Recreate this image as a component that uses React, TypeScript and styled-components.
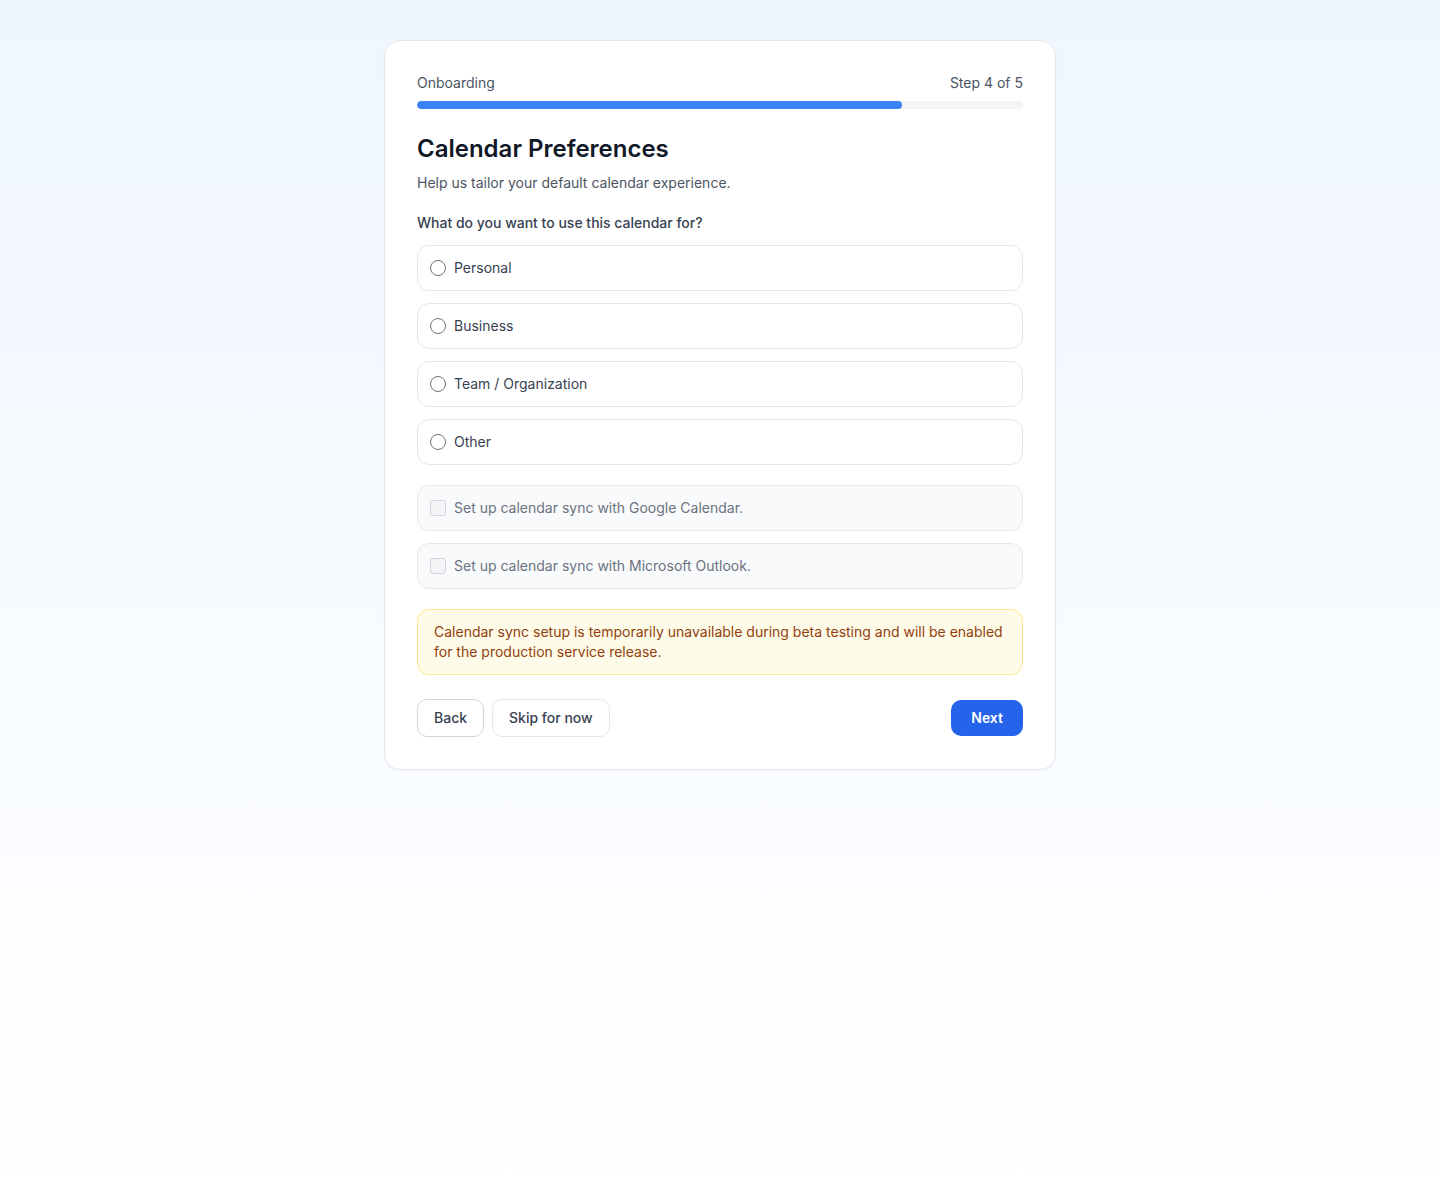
import { useState } from 'react'
import styled, { createGlobalStyle } from 'styled-components'

const GlobalStyle = createGlobalStyle`
  * {
    box-sizing: border-box;
  }

  body {
    margin: 0;
    font-family: Inter, 'Noto Sans', Arial, sans-serif;
    color: #111827;
  }
`

const Page = styled.div`
  min-height: 1200px;
  padding-top: 40px;
  background: linear-gradient(to bottom, #eff6ff 0%, #ffffff 100%);
`

const Card = styled.div`
  width: 672px;
  margin: 0 auto;
  padding: 32px;
  background-color: #ffffff;
  border: 1px solid #e5e7eb;
  border-radius: 16px;
  box-shadow: 0 1px 2px rgba(15, 23, 42, 0.04);
`

const StepHeader = styled.div`
  display: flex;
  justify-content: space-between;
  align-items: center;
  font-size: 14px;
  line-height: 20px;
  color: #4b5563;
  margin-bottom: 8px;
`

const ProgressTrack = styled.div`
  height: 8px;
  border-radius: 999px;
  background-color: #f3f4f6;
  overflow: hidden;
  margin-bottom: 24px;
`

const ProgressFill = styled.div`
  height: 100%;
  border-radius: 999px;
  background-color: #3b82f6;
`

const Title = styled.h1`
  margin: 0 0 8px;
  font-size: 24px;
  line-height: 32px;
  font-weight: 600;
  color: #111827;
`

const Subtitle = styled.p`
  margin: 0 0 20px;
  font-size: 14px;
  line-height: 20px;
  color: #4b5563;
`

const Question = styled.p`
  margin: 0 0 12px;
  font-size: 14px;
  line-height: 20px;
  font-weight: 500;
  color: #374151;
`

const OptionList = styled.div`
  display: flex;
  flex-direction: column;
  gap: 12px;
  margin-bottom: 20px;
`

const OptionRow = styled.label<{ $disabled?: boolean }>`
  display: flex;
  align-items: center;
  gap: 8px;
  padding: 12px;
  border: 1px solid #e5e7eb;
  border-radius: 12px;
  font-size: 14px;
  line-height: 20px;
  color: ${({ $disabled }) => ($disabled ? '#6b7280' : '#374151')};
  background-color: ${({ $disabled }) => ($disabled ? '#f9fafb' : '#ffffff')};
  cursor: ${({ $disabled }) => ($disabled ? 'not-allowed' : 'pointer')};
`

const Radio = styled.span<{ $checked: boolean }>`
  width: 16px;
  height: 16px;
  flex-shrink: 0;
  border-radius: 50%;
  border: 1px solid ${({ $checked }) => ($checked ? '#2563eb' : '#6b7280')};
  box-shadow: ${({ $checked }) => ($checked ? 'inset 0 0 0 3px #ffffff' : 'none')};
  background-color: ${({ $checked }) => ($checked ? '#2563eb' : '#ffffff')};
`

const Checkbox = styled.span`
  width: 16px;
  height: 16px;
  flex-shrink: 0;
  border-radius: 3px;
  border: 1px solid #d1d5db;
  background-color: #f3f4f6;
`

const Notice = styled.div`
  padding: 12px 16px;
  margin-bottom: 24px;
  border: 1px solid #fde68a;
  border-radius: 12px;
  background-color: #fefce8;
  color: #92400e;
  font-size: 14px;
  line-height: 20px;
`

const Actions = styled.div`
  display: flex;
  align-items: center;
  justify-content: space-between;
`

const ButtonGroup = styled.div`
  display: flex;
  gap: 8px;
`

const OutlineButton = styled.button<{ $strong?: boolean }>`
  padding: 8px 16px;
  border: 1px solid ${({ $strong }) => ($strong ? '#d1d5db' : '#e5e7eb')};
  border-radius: 10px;
  background-color: #ffffff;
  font-family: inherit;
  font-size: 14px;
  line-height: 20px;
  font-weight: 500;
  color: #374151;
  cursor: pointer;
`

const PrimaryButton = styled.button`
  padding: 8px 20px;
  border: none;
  border-radius: 10px;
  background-color: #2563eb;
  font-family: inherit;
  font-size: 14px;
  line-height: 20px;
  font-weight: 600;
  color: #ffffff;
  cursor: pointer;
`

const USES = ['Personal', 'Business', 'Team / Organization', 'Other']

const SYNC_OPTIONS = [
  'Set up calendar sync with Google Calendar.',
  'Set up calendar sync with Microsoft Outlook.',
]

export default function App() {
  const [selected, setSelected] = useState<string | null>(null)
  const step = 4
  const total = 5

  return (
    <>
      <GlobalStyle />
      <Page>
        <Card>
          <StepHeader>
            <span>Onboarding</span>
            <span>
              Step {step} of {total}
            </span>
          </StepHeader>
          <ProgressTrack>
            <ProgressFill style={{ width: `${(step / total) * 100}%` }} />
          </ProgressTrack>

          <Title>Calendar Preferences</Title>
          <Subtitle>Help us tailor your default calendar experience.</Subtitle>

          <Question>What do you want to use this calendar for?</Question>
          <OptionList>
            {USES.map((use) => (
              <OptionRow key={use} onClick={() => setSelected(use)}>
                <Radio $checked={selected === use} />
                {use}
              </OptionRow>
            ))}
          </OptionList>

          <OptionList>
            {SYNC_OPTIONS.map((option) => (
              <OptionRow key={option} $disabled>
                <Checkbox />
                {option}
              </OptionRow>
            ))}
          </OptionList>

          <Notice>
            Calendar sync setup is temporarily unavailable during beta testing and will be
            enabled for the production service release.
          </Notice>

          <Actions>
            <ButtonGroup>
              <OutlineButton $strong>Back</OutlineButton>
              <OutlineButton>Skip for now</OutlineButton>
            </ButtonGroup>
            <PrimaryButton>Next</PrimaryButton>
          </Actions>
        </Card>
      </Page>
    </>
  )
}
